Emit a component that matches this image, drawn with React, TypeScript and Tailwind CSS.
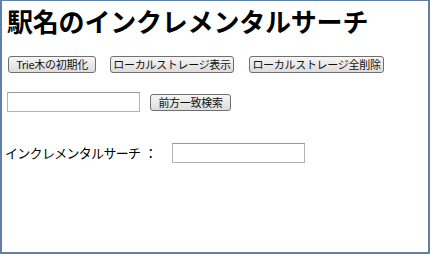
const jp = "font-['Noto_Sans_CJK_JP',sans-serif]";

function Btn({ label, w }: { label: string; w: string }) {
  return (
    <button
      className={`${w} h-[17px] flex items-center justify-center rounded-[3px] border border-[#707070] bg-gradient-to-b from-[#f6f6f6] to-[#dddddd] text-[11px] tracking-[-0.3px] leading-none text-[#111]`}
    >
      {label}
    </button>
  );
}

function Field({ w }: { w: string }) {
  return <input className={`${w} h-[20px] border border-[#b4b4b4] border-t-[#9a9a9a] bg-white`} />;
}

export default function App() {
  return (
    <div className={`${jp} w-[430px] h-[254px] bg-white border-x-2 border-b-2 border-t border-[#5f80a8] text-black`}>
      <h1 className="mt-[5px] ml-[5px] text-[26px] leading-[30px] font-bold tracking-[-0.2px]">駅名のインクレメンタルサーチ</h1>

      <div className="mt-[20px] ml-[6px] flex items-center">
        <Btn label="Trie木の初期化" w="w-[88px]" />
        <div className="ml-[14px]">
          <Btn label="ローカルストレージ表示" w="w-[124px]" />
        </div>
        <div className="ml-[15px]">
          <Btn label="ローカルストレージ全削除" w="w-[135px]" />
        </div>
      </div>

      <div className="mt-[19px] ml-[5px] flex items-center">
        <Field w="w-[133px]" />
        <div className="ml-[10px]">
          <Btn label="前方一致検索" w="w-[81px]" />
        </div>
      </div>

      <div className="mt-[31px] ml-[3px] flex items-center text-[13px] tracking-[-0.7px]">
        <span>インクレメンタルサーチ</span>
        <span className="ml-[4px]">：</span>
        <div className="ml-[15px]">
          <Field w="w-[133px]" />
        </div>
      </div>
    </div>
  );
}
